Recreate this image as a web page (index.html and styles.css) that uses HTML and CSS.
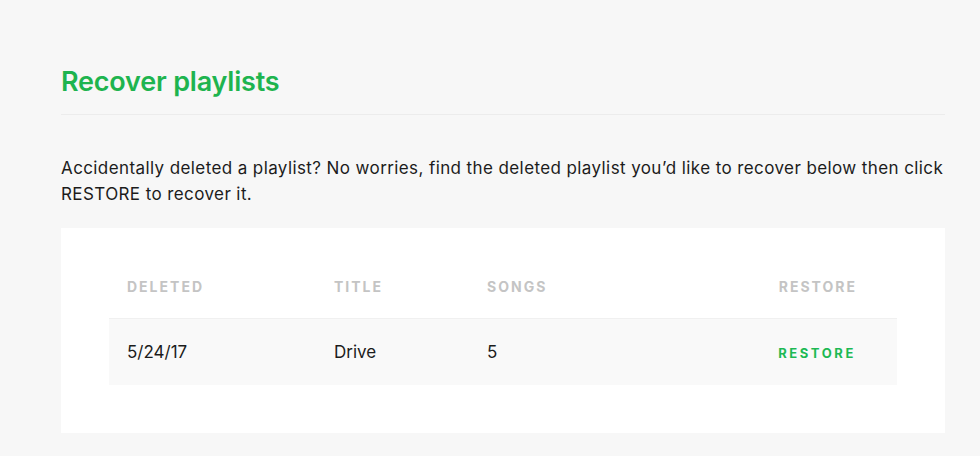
FILE: index.html
```html
<!DOCTYPE html>
<html>
<head>
<meta charset="utf-8">
<link rel="stylesheet" href="styles.css">
</head>
<body>
<main class="page">
  <h1 class="title">Recover playlists</h1>
  <hr class="divider">
  <p class="intro">Accidentally deleted a playlist? No worries, find the deleted playlist you’d like to recover below then click RESTORE to recover it.</p>
  <section class="card">
    <div class="table">
      <div class="row head">
        <span class="c-date">DELETED</span>
        <span class="c-title">TITLE</span>
        <span class="c-songs">SONGS</span>
        <span class="c-restore">RESTORE</span>
      </div>
      <div class="row item">
        <span class="c-date">5/24/17</span>
        <span class="c-title">Drive</span>
        <span class="c-songs">5</span>
        <span class="c-restore"><a class="restore-btn">RESTORE</a></span>
      </div>
    </div>
  </section>
</main>
</body>
</html>
```
FILE: styles.css
```css
html, body {
  margin: 0;
  padding: 0;
  background: #f7f7f7;
}
body {
  font-family: "Inter", "Open Sans", sans-serif;
  color: #222;
}
.page {
  padding: 62px 35px 0 61px;
}
.title {
  margin: 0;
  font-size: 27px;
  font-weight: 600;
  color: #1eb44f;
  line-height: 40px;
  letter-spacing: -0.2px;
}
.divider {
  border: 0;
  border-top: 1px solid #ececec;
  margin: 12px 0 0 0;
}
.intro {
  margin: 40px 0 0 0;
  font-size: 17px;
  line-height: 26px;
  letter-spacing: 0.4px;
  color: #1c1c1c;
}
.card {
  margin-top: 21px;
  background: #fff;
  padding: 48px 48px 48px;
}
.row {
  display: grid;
  grid-template-columns: 207px 153px 1fr 120px;
  align-items: center;
  padding: 0 42px 0 18px;
}
.head {
  line-height: 22px;
  padding-bottom: 20px;
  font-size: 14px;
  font-weight: 700;
  letter-spacing: 2px;
  color: #c4c4c4;
  border-bottom: 1px solid #f0f0f0;
}
.head .c-restore {
  margin-right: -2px;
}
.item {
  height: 66px;
  background: #f9f9f9;
  font-size: 17px;
  color: #1c1c1c;
}
.c-restore {
  text-align: right;
}
.restore-btn {
  font-size: 13px;
  font-weight: 700;
  letter-spacing: 2.6px;
  color: #1db954;
  margin-right: -1px;
}
```
